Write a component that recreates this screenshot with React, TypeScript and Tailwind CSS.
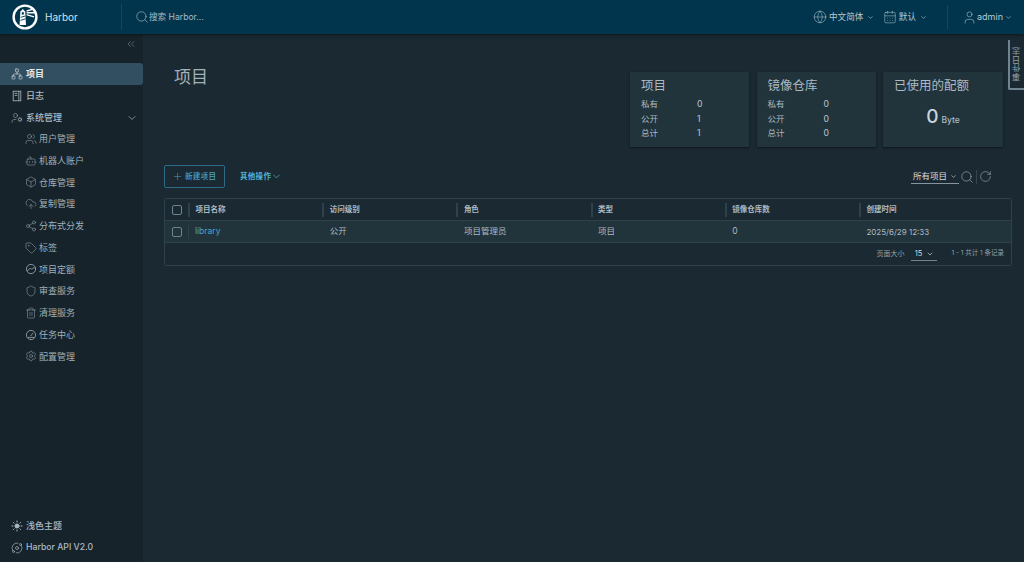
import {
  Box,
  Bot,
  ChevronDown,
  ChevronsLeft,
  CloudUpload,
  Globe,
  Network,
  Plus,
  RotateCw,
  Search,
  Settings,
  Share2,
  Shield,
  Sun,
  Tag,
  Trash2,
  User,
  UserCog,
  Users,
  CalendarDays,
  Orbit,
} from 'lucide-react';

const cjk = { fontFamily: 'Inter, "Noto Sans CJK SC", sans-serif' };

function LogBook() {
  return (
    <svg width="12" height="12" viewBox="0 0 12 12" fill="none" stroke="currentColor" strokeWidth="0.8">
      <rect x="2.2" y="1.2" width="7.6" height="9.6" />
      <path d="M7.8 1.2 V10.8 M3.6 3.4 H6.4 M3.6 5.4 H6.4" />
    </svg>
  );
}

function Quota() {
  return (
    <svg width="12" height="12" viewBox="0 0 12 12" fill="none" stroke="currentColor" strokeWidth="0.8">
      <circle cx="6" cy="6" r="4.6" />
      <path d="M2.4 8 C3.8 5.4 6 5 6.6 6.2 C7.4 5 9 4.8 10.4 5" />
    </svg>
  );
}

function Dial() {
  return (
    <svg width="12" height="12" viewBox="0 0 12 12" fill="none" stroke="currentColor" strokeWidth="0.8">
      <circle cx="6" cy="6" r="4.6" />
      <path d="M5.6 7 L8 4 M3 8.4 H9" />
    </svg>
  );
}

const subItems = [
  { label: '用户管理', icon: <Users size={12} strokeWidth={1} /> },
  { label: '机器人账户', icon: <Bot size={12} strokeWidth={1} /> },
  { label: '仓库管理', icon: <Box size={12} strokeWidth={1} /> },
  { label: '复制管理', icon: <CloudUpload size={12} strokeWidth={1} /> },
  { label: '分布式分发', icon: <Share2 size={12} strokeWidth={1} /> },
  { label: '标签', icon: <Tag size={12} strokeWidth={1} /> },
  { label: '项目定额', icon: <Quota /> },
  { label: '审查服务', icon: <Shield size={12} strokeWidth={1} /> },
  { label: '清理服务', icon: <Trash2 size={12} strokeWidth={1} /> },
  { label: '任务中心', icon: <Dial /> },
  { label: '配置管理', icon: <Settings size={12} strokeWidth={1} /> },
];

function Logo() {
  return (
    <svg width="26" height="26" viewBox="0 0 26 26" className="shrink-0">
      <circle cx="13" cy="13" r="11.4" fill="none" stroke="#fff" strokeWidth="2.4" />
      <path d="M9 7 L10.8 5 L12.6 7 L13.2 7 L14 21 L7.6 21 L8.4 7 Z" fill="#fff" />
      <rect x="9.8" y="8.2" width="2" height="2.4" fill="#00354d" />
      <path d="M8.6 13.4 L13.2 12 M8.4 16.4 L13.6 14.8" stroke="#00354d" strokeWidth="0.9" />
      <path d="M14.6 7 L22 4.8 M14.6 8.8 L23 8.8 M14.6 10.6 L22 12.8" stroke="#fff" strokeWidth="1.4" />
    </svg>
  );
}

function Stat({ title, rows }: { title: string; rows: [string, string][] }) {
  return (
    <div className="w-[119px] h-[75px] bg-[#21333b] shadow-[0_1px_2px_#0d161b] px-[11px] pt-[6px]">
      <div className="text-[12.5px] leading-[16px] text-[#acbac3] mb-[3px]">{title}</div>
      {rows.map(([k, v]) => (
        <div key={k} className="flex h-[14.7px] items-center text-[8.5px] text-[#acbac3]">
          <span className="w-[56px]">{k}</span>
          <span className="text-[8.5px] font-medium">{v}</span>
        </div>
      ))}
    </div>
  );
}

function Checkbox() {
  return <div className="w-[10px] h-[10px] rounded-[2px] border border-[#6f8490]" />;
}

function HeadCell({ width, label }: { width: string; label: string }) {
  return (
    <div className={`${width} flex items-center h-[14px] border-l-2 border-[#2e424d] pl-[5.5px] text-[7.5px] font-semibold text-[#acbac3]`}>
      {label}
    </div>
  );
}

function BodyCell({ width, children }: { width: string; children: React.ReactNode }) {
  return <div className={`${width} pl-[7.5px] text-[8.5px] text-[#acbac3]`}>{children}</div>;
}

export default function App() {
  return (
    <div className="w-[1024px] h-[562px] overflow-hidden flex flex-col bg-[#1b2a32]" style={cjk}>
      <header className="h-[34px] shrink-0 bg-[#00354d] flex items-center shadow-[0_1px_3px_#0d161b] z-10">
        <div className="w-[122px] h-[26px] flex items-center pl-[12px] border-r border-[#0f4a63]">
          <Logo />
          <span className="ml-[7px] text-[10px] text-[#d6e1e6]">Harbor</span>
        </div>
        <div className="ml-[13px] flex items-center flex-1 text-[#a9bcc6]">
          <Search size={14} strokeWidth={1.1} />
          <span className="text-[8.6px]">搜索 Harbor...</span>
        </div>
        <div className="flex items-center text-[#b9c9d1] text-[8.6px]">
          <Globe size={14} strokeWidth={0.9} />
          <span className="ml-[2px]">中文简体</span>
          <ChevronDown size={7} className="ml-[3.5px]" />
          <CalendarDays size={14} strokeWidth={0.9} className="ml-[9px]" />
          <span className="ml-[2px]">默认</span>
          <ChevronDown size={7} className="ml-[4px]" />
          <div className="w-px h-[24px] bg-[#0f4a63] ml-[20px]" />
          <User size={15} strokeWidth={0.9} className="ml-[14px]" />
          <span className="text-[9px]">admin</span>
          <ChevronDown size={7} className="ml-[2px] mr-[12px]" />
        </div>
      </header>

      <div className="flex flex-1 min-h-0 relative">
        <aside className="w-[143px] shrink-0 bg-[#17232b] flex flex-col text-[#acbac3]">
          <div className="h-[29px] flex items-start justify-end pr-[6px] pt-[4px] text-[#7f929c]">
            <ChevronsLeft size={12} strokeWidth={1.1} />
          </div>
          <div className="h-[22px] bg-[#324f61] rounded-r-[3px] flex items-center pl-[11px] text-[#e3ebef] text-[9px] font-semibold">
            <Network size={12} strokeWidth={1.1} />
            <span className="ml-[3px]">项目</span>
          </div>
          <div className="h-[22px] flex items-center pl-[11px] text-[9px] font-medium">
            <LogBook />
            <span className="ml-[3px]">日志</span>
          </div>
          <div className="h-[21px] flex items-center pl-[11px] text-[9px] font-medium">
            <UserCog size={12} strokeWidth={1} />
            <span className="ml-[3px]">系统管理</span>
            <ChevronDown size={12} strokeWidth={1.4} className="ml-auto mr-[5px]" />
          </div>
          {subItems.map(({ label, icon }) => (
            <div key={label} className="h-[21.75px] flex items-center pl-[25px] text-[9px] text-[#9fafb8]">
              {icon}
              <span className="ml-[2px]">{label}</span>
            </div>
          ))}
          <div className="mt-auto pb-[3px]">
            <div className="h-[22px] flex items-center pl-[11px] text-[9px] font-medium">
              <Sun size={12} fill="currentColor" />
              <span className="ml-[3px]">浅色主题</span>
            </div>
            <div className="h-[22px] flex items-center pl-[11px] text-[8.7px] font-medium">
              <Orbit size={12} strokeWidth={1.3} />
              <span className="ml-[3px]">Harbor API V2.0</span>
            </div>
          </div>
        </aside>

        <main className="flex-1 pl-[21px] pr-[12px] pt-[38px] relative">
          <div className="flex items-start">
            <h1 className="pl-[10px] text-[17px] leading-[10px] font-normal text-[#a3b1b9]">项目</h1>
            <div className="ml-auto flex gap-[7.5px] mr-[9px]">
              <Stat title="项目" rows={[['私有', '0'], ['公开', '1'], ['总计', '1']]} />
              <Stat title="镜像仓库" rows={[['私有', '0'], ['公开', '0'], ['总计', '0']]} />
              <div className="w-[120px] h-[75px] bg-[#21333b] shadow-[0_1px_2px_#0d161b] px-[11px] pt-[6px] text-[#acbac3]">
                <div className="text-[12.5px] leading-[16px]">已使用的配额</div>
                <div className="flex items-baseline justify-center mt-[12px]">
                  <span className="text-[19px] leading-[22px] font-medium text-[#c9d5db]">0</span>
                  <span className="text-[8.5px] ml-[3px] font-medium">Byte</span>
                </div>
              </div>
            </div>
          </div>

          <div className="flex items-center mt-[18px] h-[23px]">
            <div className="w-[61px] h-[23px] rounded-[2px] border border-[#2c6a87] flex items-center pl-[7px] text-[#4aa3c7] text-[7.5px] font-medium tracking-[0.3px]">
              <Plus size={11} strokeWidth={1.1} />
              <span className="ml-[2px]">新建项目</span>
            </div>
            <div className="ml-[15px] flex items-center text-[#57b1d4] text-[7.5px] font-semibold tracking-[0.3px]">
              其他操作
              <ChevronDown size={11} strokeWidth={1.6} />
            </div>
            <div className="ml-auto flex items-center text-[#acbac3] mr-[20px]">
              <div className="w-[48px] h-[14px] border-b border-[#8495a0] flex items-center justify-center text-[8.5px] text-[#d3dde2]">
                所有项目
                <ChevronDown size={7} className="ml-[3px]" />
              </div>
              <Search size={14} strokeWidth={1} className="ml-[1px]" />
              <div className="w-px h-[14px] bg-[#33464f] ml-[2px]" />
              <RotateCw size={13} strokeWidth={1} className="ml-[2px]" />
            </div>
          </div>

          <div className="mt-[10px] h-[68px] rounded-[3px] border border-[#2e424d] flex flex-col">
            <div className="h-[21px] flex items-center shrink-0">
              <div className="w-[23px] flex justify-center pl-[1px]"><Checkbox /></div>
              <HeadCell width="w-[134.2px]" label="项目名称" />
              <HeadCell width="w-[134.2px]" label="访问级别" />
              <HeadCell width="w-[134.2px]" label="角色" />
              <HeadCell width="w-[134.2px]" label="类型" />
              <HeadCell width="w-[134.2px]" label="镜像仓库数" />
              <HeadCell width="flex-1" label="创建时间" />
            </div>
            <div className="h-[23px] bg-[#21333b] border-y border-[#2e424d] flex items-center shrink-0">
              <div className="w-[23px] flex justify-center pl-[1px]"><Checkbox /></div>
              <div className="w-[134.2px] h-[14px] flex items-center border-l border-[#2e424d] pl-[6px] text-[8.5px] text-[#4aa8cf]">library</div>
              <BodyCell width="w-[134.2px]">公开</BodyCell>
              <BodyCell width="w-[134.2px]">项目管理员</BodyCell>
              <BodyCell width="w-[134.2px]">项目</BodyCell>
              <BodyCell width="w-[134.2px]">0</BodyCell>
              <div className="flex-1 pl-[7.5px] text-[8px] text-[#acbac3]">2025/6/29 12:33</div>
            </div>
            <div className="flex-1 flex items-center justify-end pr-[7px] text-[7px] text-[#8fa1ab]">
              <span>页面大小</span>
              <div className="ml-[7px] w-[26px] h-[14px] border-b border-[#6f8490] flex items-center justify-center text-[#c9d5db] text-[7.5px]">
                15
                <ChevronDown size={8} className="ml-[4px]" />
              </div>
              <span className="ml-[14px] text-[6.5px]">1 - 1 共计 1 条记录</span>
            </div>
          </div>

          <div className="absolute right-0 top-[6px] w-[16px] h-[50px] border-l-2 border-b-2 border-[#6f8490] rounded-bl-[2px] flex items-center justify-center">
            <span className="text-[8.5px] text-[#8fa1ab] [writing-mode:vertical-rl] rotate-180">事件日志</span>
          </div>
        </main>
      </div>
    </div>
  );
}
